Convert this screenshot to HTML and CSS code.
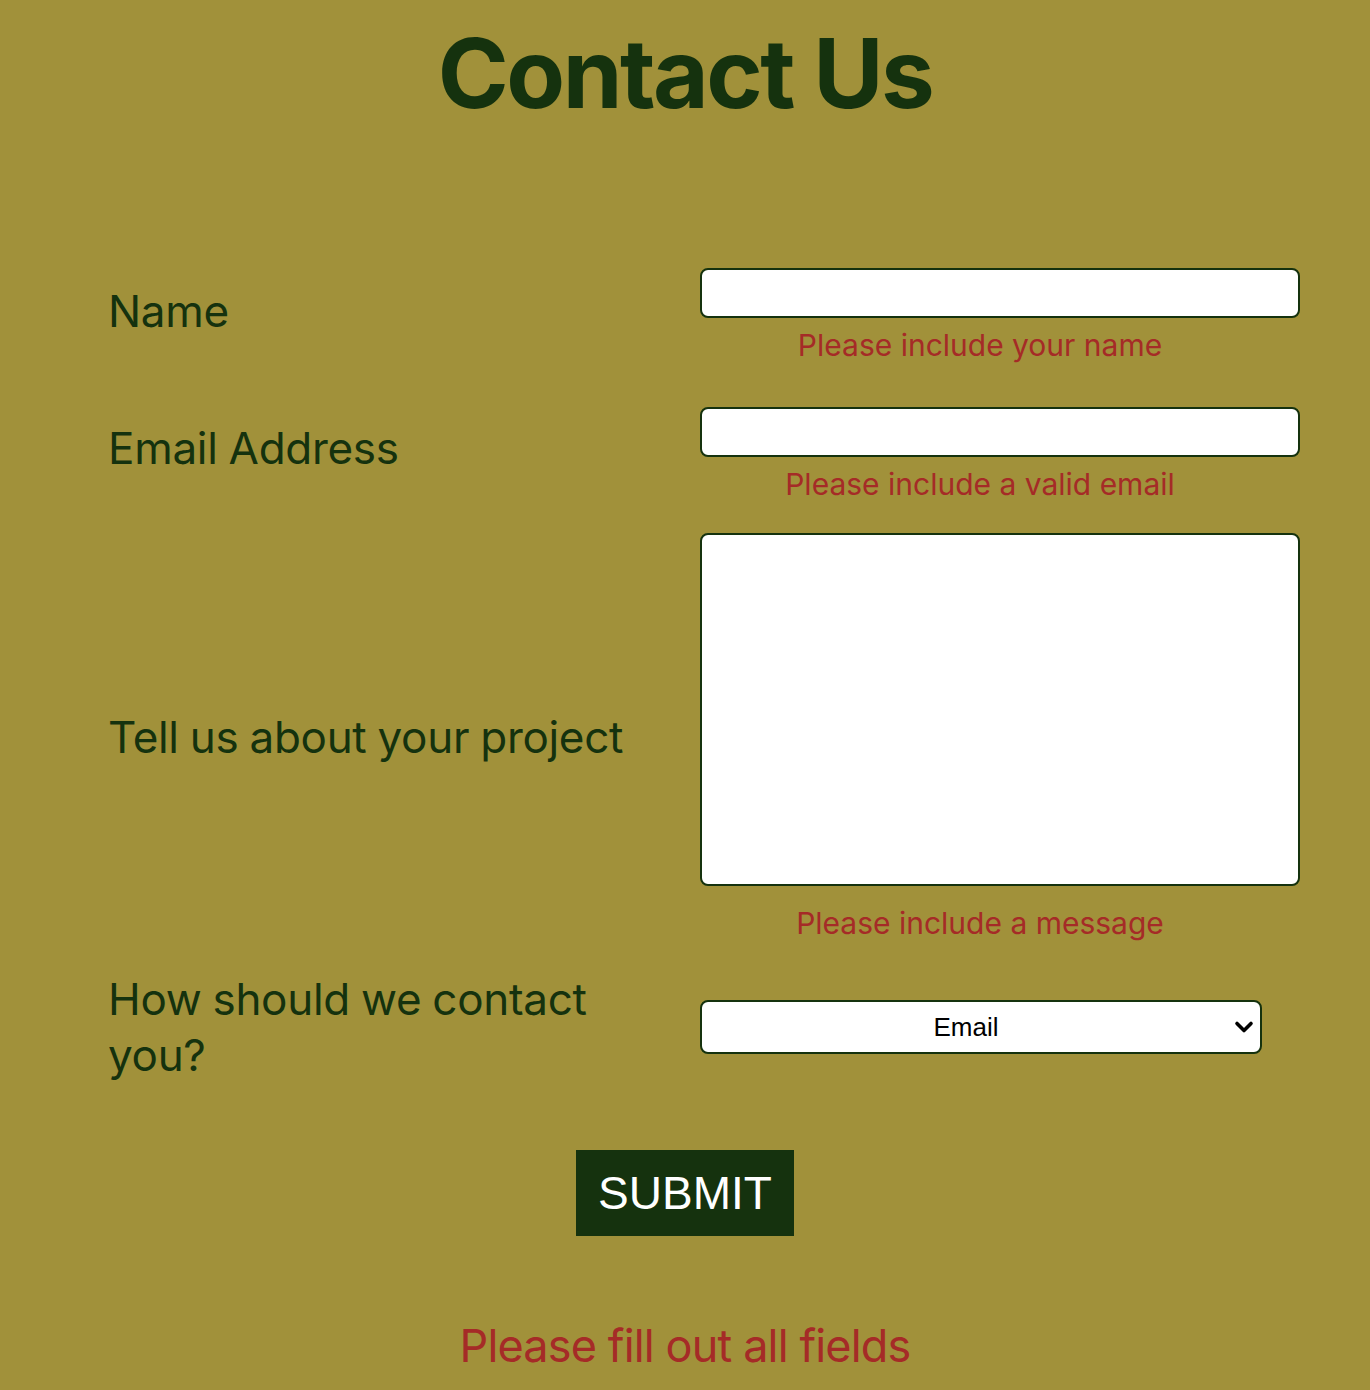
FILE: index.html
```html
<!DOCTYPE html>
<html lang="en">
<head>
<meta charset="utf-8">
<title>Contact Us</title>
<link rel="stylesheet" href="styles.css">
</head>
<body>
<main class="page">
  <h1 class="title">Contact Us</h1>
  <form class="contact-form">
    <div class="row row-name">
      <label class="label" for="name">Name</label>
      <div class="field">
        <input class="input" id="name" type="text">
        <p class="error">Please include your name</p>
      </div>
    </div>
    <div class="row row-email">
      <label class="label" for="email">Email Address</label>
      <div class="field">
        <input class="input" id="email" type="email">
        <p class="error">Please include a valid email</p>
      </div>
    </div>
    <div class="row row-project">
      <label class="label" for="project">Tell us about your project</label>
      <div class="field">
        <textarea class="textarea" id="project"></textarea>
        <p class="error error-textarea">Please include a message</p>
      </div>
    </div>
    <div class="row row-contact">
      <label class="label" for="method">How should we contact you?</label>
      <div class="field">
        <div class="select-wrap">
          <select class="select" id="method">
            <option>Email</option>
            <option>Phone</option>
          </select>
          <svg class="chevron" width="20" height="14" viewBox="0 0 20 14" aria-hidden="true">
            <path d="M3 3.5 L10 10.5 L17 3.5" fill="none" stroke="#000" stroke-width="3.6" stroke-linecap="round" stroke-linejoin="round"/>
          </svg>
        </div>
      </div>
    </div>
    <div class="actions">
      <button class="submit" type="button">SUBMIT</button>
    </div>
    <p class="form-error">Please fill out all fields</p>
  </form>
</main>
</body>
</html>
```

FILE: styles.css
```css
html, body {
  margin: 0;
  padding: 0;
}

body {
  background: #a1913a;
  font-family: Inter, "Noto Sans", "Liberation Sans", sans-serif;
  color: #15320e;
  min-height: 1390px;
}

.title {
  margin: 15px 0 0;
  text-align: center;
  font-size: 96px;
  font-weight: 700;
  line-height: 116px;
  color: #15320e;
  letter-spacing: -2.5px;
}

.contact-form {
  width: 1150px;
  margin: 137px auto 0;
}

.row {
  display: grid;
  grid-template-columns: 590px 560px;
  align-items: center;
}

.row-email { margin-top: 44px; }
.row-project { margin-top: 31px; }
.row-contact { margin-top: 30px; }

.label {
  font-size: 44px;
  line-height: 56px;
  color: #15320e;
  padding-right: 40px;
  margin-left: -2px;
  letter-spacing: -0.3px;
  word-spacing: -1px;
}

.row-name .label { margin-bottom: 10px; }
.row-email .label { margin-bottom: 14px; }

.field {
  display: flex;
  flex-direction: column;
}

.input {
  display: block;
  box-sizing: border-box;
  width: 600px;
  height: 50px;
  margin: 0;
  border: 2px solid #15320e;
  border-radius: 8px;
  background: #fff;
  font-size: 24px;
  padding: 0 10px;
}

.textarea {
  display: block;
  box-sizing: border-box;
  width: 600px;
  height: 353px;
  margin: 0;
  border: 2px solid #15320e;
  border-radius: 8px;
  background: #fff;
  resize: none;
  font-size: 24px;
}

.error {
  margin: 9px 0 0;
  text-align: center;
  font-size: 30px;
  line-height: 36px;
  color: #a52b27;
}

.error-textarea {
  margin-top: 19px;
}

.select-wrap {
  position: relative;
  width: 562px;
}

.select {
  display: block;
  box-sizing: border-box;
  width: 562px;
  height: 54px;
  margin: 0;
  border: 2px solid #15320e;
  border-radius: 8px;
  background: #fff;
  appearance: none;
  -webkit-appearance: none;
  font-family: "Liberation Sans", Arial, sans-serif;
  font-size: 26px;
  color: #000;
  text-align: center;
  text-align-last: center;
  padding: 0 40px 0 10px;
}

.chevron {
  position: absolute;
  right: 8px;
  top: 20px;
  pointer-events: none;
}

.actions {
  display: flex;
  justify-content: center;
  margin-top: 67px;
}

.submit {
  box-sizing: border-box;
  width: 218px;
  height: 86px;
  margin: 0;
  border: none;
  border-radius: 0;
  background: #15320e;
  color: #fff;
  font-family: "Liberation Sans", Arial, sans-serif;
  font-size: 46px;
  padding: 0;
  cursor: pointer;
}

.form-error {
  margin: 83px 0 0;
  text-align: center;
  font-size: 45px;
  line-height: 54px;
  color: #a52b27;
  letter-spacing: -0.85px;
}
```
